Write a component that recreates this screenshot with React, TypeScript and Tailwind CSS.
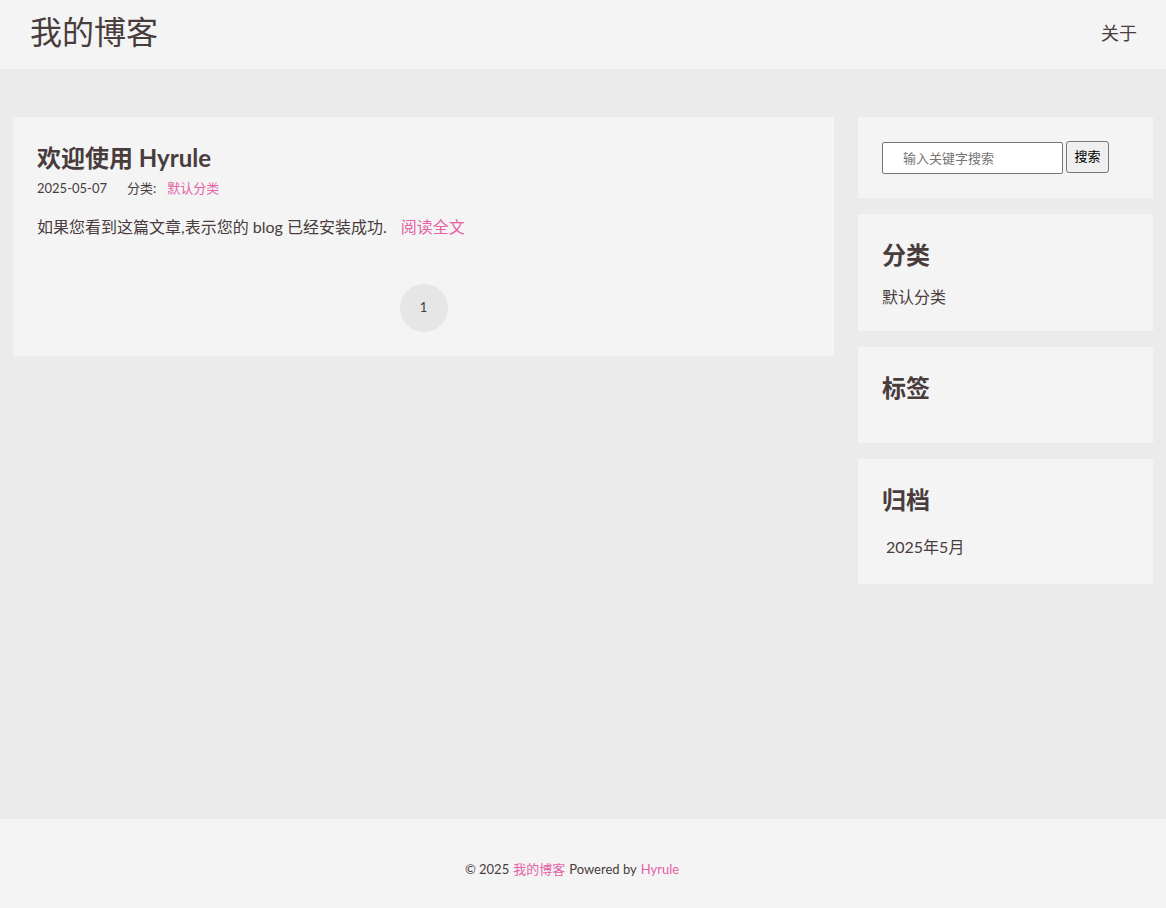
import React from "react"

const sans = "font-['Lato','Noto_Sans_CJK_SC',sans-serif]"

function Widget({ title, children, className }: { title: string; children?: React.ReactNode; className?: string }) {
  return (
    <div className={`bg-[#f4f4f4] px-6 pt-6 ${className ?? "pb-[22px]"}`}>
      <h3 className="text-[24px] font-bold leading-[34px] text-[#483c3c]">{title}</h3>
      {children}
    </div>
  )
}

export default function App() {
  return (
    <div className={`min-h-screen flex flex-col bg-[#ebebeb] text-[#483c3c] ${sans}`}>
      <header className="h-[69px] bg-[#f4f4f4] flex items-center justify-between pl-[30px] pr-[29px] shrink-0">
        <a className="text-[32px] leading-none text-[#483c3c] font-['Liberation_Serif','Noto_Sans_CJK_SC',serif] -mt-1">
          我的博客
        </a>
        <a className="text-[18px] text-[#483c3c] font-['Liberation_Serif','Noto_Sans_CJK_SC',serif]">关于</a>
      </header>

      <main className="flex-1 flex items-start gap-6 px-[13px] pt-12 pb-12">
        <div className="flex-1 bg-[#f4f4f4] px-6 pt-[26px] pb-6">
          <h2 className="text-[24px] font-bold leading-[30px]">欢迎使用 Hyrule</h2>
          <div className="mt-[6px] flex items-center text-[13px] leading-[18px]">
            <span>2025-05-07</span>
            <span className="ml-5">分类:</span>
            <a className="ml-[11px] text-[#e462a6]">默认分类</a>
          </div>
          <p className="mt-[19px] text-[16px] leading-[22px]">
            如果您看到这篇文章,表示您的 blog 已经安装成功.
            <a className="ml-[14px] text-[#e462a6]">阅读全文</a>
          </p>
          <div className="mt-[46px] flex justify-center">
            <span className="w-12 h-12 rounded-full bg-[#e6e6e6] flex items-center justify-center text-[13px]">1</span>
          </div>
        </div>

        <aside className="w-[295px] shrink-0 flex flex-col gap-4">
          <div className="bg-[#f4f4f4] px-6 pt-[25px] pb-6 flex items-start">
            <input
              placeholder="输入关键字搜索"
              className="w-[181px] h-8 bg-white border border-[#767676] rounded-[2px] pl-5 text-[13px] placeholder:text-[#757575] outline-none"
            />
            <button className="ml-[3px] -mt-px h-8 w-[43px] bg-[#efefef] border border-[#767676] rounded-[3px] text-[13px] text-black">
              搜索
            </button>
          </div>
          <Widget title="分类">
            <div className="mt-[13px] text-[16px] leading-[24px]">默认分类</div>
          </Widget>
          <Widget title="标签" className="pb-[38px]" />
          <Widget title="归档" className="pb-[25px]">
            <div className="mt-[18px] pl-1 text-[16px] leading-[24px]">2025年5月</div>
          </Widget>
        </aside>
      </main>

      <footer className="h-[89px] bg-[#f4f4f4] flex items-center justify-center text-[13px] shrink-0 pt-[12px] pr-[22px]">
        © 2025 <a className="mx-1 text-[#e462a6]">我的博客</a> Powered by <a className="ml-1 text-[#e462a6]">Hyrule</a>
      </footer>
    </div>
  )
}
